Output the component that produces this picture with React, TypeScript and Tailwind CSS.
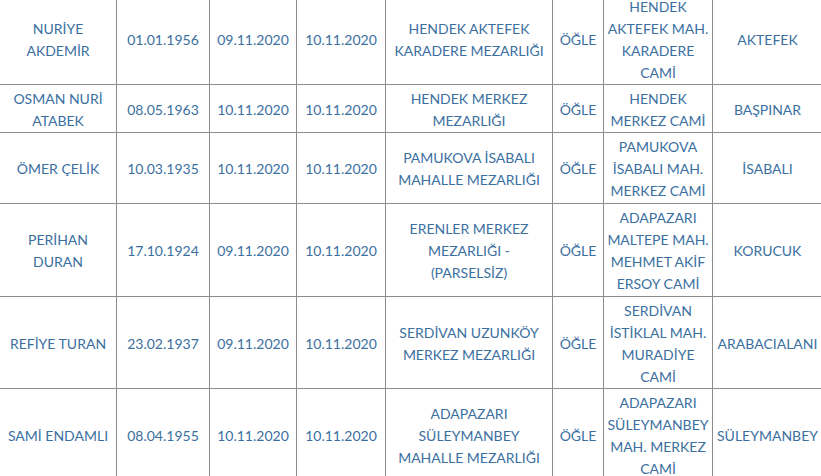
import React from "react";

type Row = { h: string; cells: string[][] };

const colClasses = [
  "w-[117px]",
  "w-[93px]",
  "w-[87px]",
  "w-[89px]",
  "w-[167px]",
  "w-[51px]",
  "w-[109px]",
  "w-[110px]",
];

const rows: Row[] = [
  {
    h: "h-[92px]",
    cells: [
      ["Nuriye", "Akdemir"],
      ["01.01.1956"],
      ["09.11.2020"],
      ["10.11.2020"],
      ["Hendek Aktefek", "Karadere Mezarlığı"],
      ["Öğle"],
      ["Hendek", "Aktefek Mah.", "Karadere", "Cami"],
      ["Aktefek"],
    ],
  },
  {
    h: "h-[48px]",
    cells: [
      ["Osman Nuri", "Atabek"],
      ["08.05.1963"],
      ["10.11.2020"],
      ["10.11.2020"],
      ["Hendek Merkez", "Mezarlığı"],
      ["Öğle"],
      ["Hendek", "Merkez Cami"],
      ["Başpınar"],
    ],
  },
  {
    h: "h-[71px]",
    cells: [
      ["Ömer Çelik"],
      ["10.03.1935"],
      ["10.11.2020"],
      ["10.11.2020"],
      ["Pamukova İsabalı", "Mahalle Mezarlığı"],
      ["Öğle"],
      ["Pamukova", "İsabalı Mah.", "Merkez Cami"],
      ["İsabalı"],
    ],
  },
  {
    h: "h-[93px]",
    cells: [
      ["Perihan", "Duran"],
      ["17.10.1924"],
      ["09.11.2020"],
      ["10.11.2020"],
      ["Erenler Merkez", "Mezarlığı -", "(Parselsiz)"],
      ["Öğle"],
      ["Adapazarı", "Maltepe Mah.", "Mehmet Akif", "Ersoy Cami"],
      ["Korucuk"],
    ],
  },
  {
    h: "h-[92px]",
    cells: [
      ["Refiye Turan"],
      ["23.02.1937"],
      ["09.11.2020"],
      ["10.11.2020"],
      ["Serdivan Uzunköy", "Merkez Mezarlığı"],
      ["Öğle"],
      ["Serdivan", "İstiklal Mah.", "Muradiye", "Cami"],
      ["Arabacıalanı"],
    ],
  },
  {
    h: "h-[92px]",
    cells: [
      ["Sami Endamlı"],
      ["08.04.1955"],
      ["10.11.2020"],
      ["10.11.2020"],
      ["Adapazarı", "Süleymanbey", "Mahalle Mezarlığı"],
      ["Öğle"],
      ["Adapazarı", "Süleymanbey", "Mah. Merkez", "Cami"],
      ["Süleymanbey"],
    ],
  },
];

export default function App() {
  return (
    <div lang="tr" className="w-[821px] h-[476px] overflow-hidden bg-white">
      <table className="w-[823px] border-collapse table-fixed mt-[-8px] ml-[-1px] text-[#3b6f9f] text-[14px] leading-[22px] uppercase font-['Lato',sans-serif]">
        <colgroup>
          {colClasses.map((c, i) => (
            <col key={i} className={c} />
          ))}
        </colgroup>
        <tbody>
          {rows.map((r, ri) => (
            <tr key={ri} className={r.h}>
              {r.cells.map((c, ci) => (
                <td
                  key={ci}
                  className="border border-[#8c8c8c] text-center align-middle pt-[2px] px-0 pb-0 whitespace-nowrap"
                >
                  {c.map((l, li) => (
                    <div key={li}>{l}</div>
                  ))}
                </td>
              ))}
            </tr>
          ))}
        </tbody>
      </table>
    </div>
  );
}
